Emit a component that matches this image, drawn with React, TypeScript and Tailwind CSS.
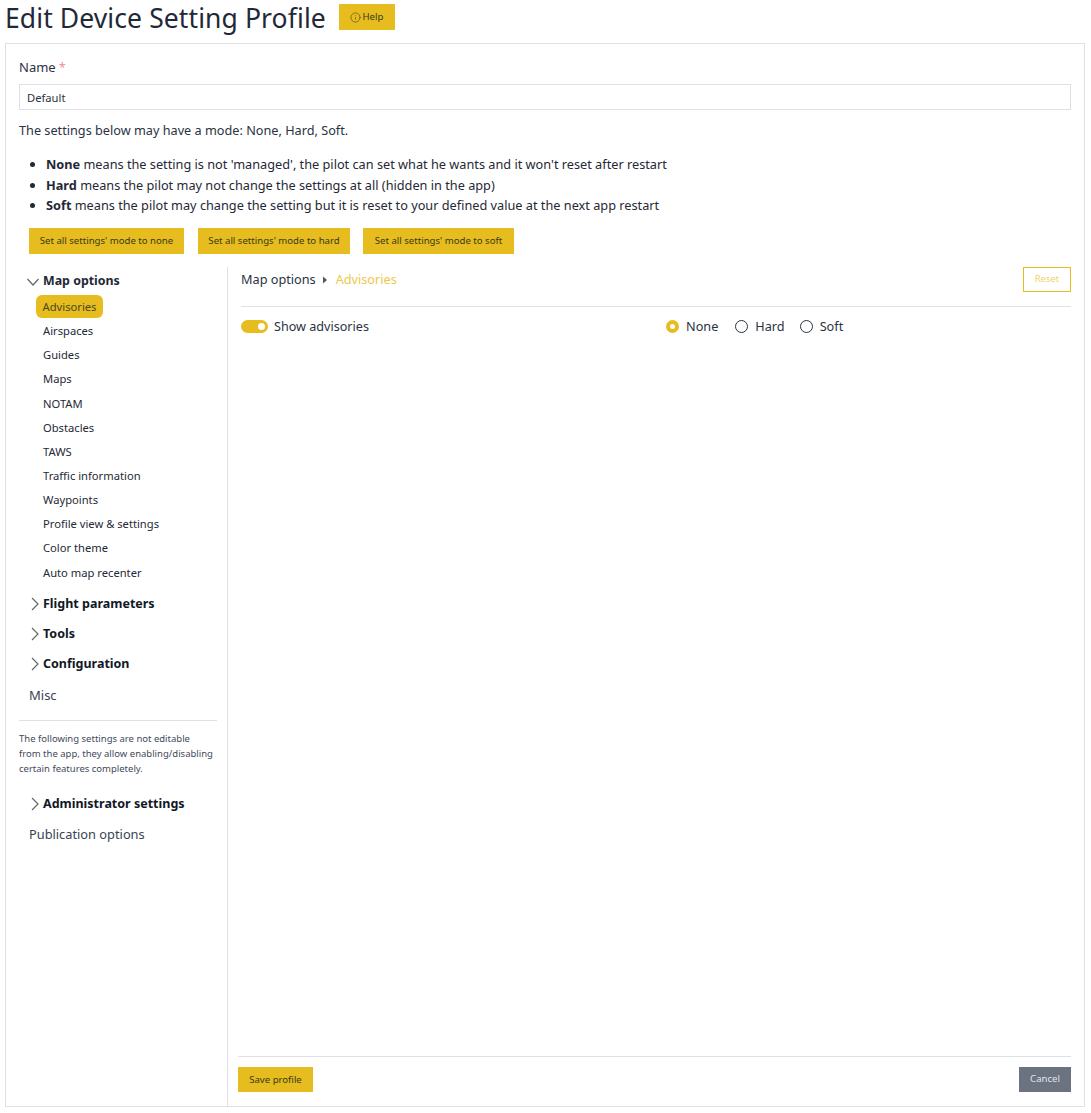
import React from "react";
import { Info } from "lucide-react";

const font = "font-['Noto_Sans','Open_Sans',sans-serif]";
const ybtn = "bg-[#e6bc1e] text-[#3a3a1a] text-[9.6px] leading-none flex items-center justify-center";

const subItems = ["Airspaces", "Guides", "Maps", "NOTAM", "Obstacles", "TAWS", "Traffic information", "Waypoints", "Profile view & settings", "Color theme", "Auto map recenter"];

function Right() {
  return (
    <svg width="8" height="14" viewBox="0 0 8 14" fill="none" className="shrink-0 -mt-[1px]">
      <path d="M1 1 L7 7 L1 13" stroke="#666" strokeWidth="1.2" />
    </svg>
  );
}

function Group({ label, className = "" }: { label: string; className?: string }) {
  return (
    <div className={`flex items-center h-[30px] pl-[12px] ${className}`}>
      <Right />
      <span className="ml-[4px] text-[12.5px] font-bold text-[#111827]">{label}</span>
    </div>
  );
}

export default function App() {
  return (
    <div className={`${font} w-[1091px] h-[1113px] bg-white text-[#2a3342] overflow-hidden`}>
      <div className="h-[43px] pl-[5px] pr-[6px] flex items-start">
        <h1 className="text-[26.5px] leading-[37px] text-[#1f2937] tracking-[0.1px]">Edit Device Setting Profile</h1>
        <button className={`${ybtn} ml-[13px] mt-[4px] w-[56px] h-[26px] gap-[1px]`}>
          <Info size={11} strokeWidth={1.2} />Help
        </button>
      </div>
      <div className="ml-[5px] w-[1080px] h-[1064px] border border-[#dfe0e6] px-[13px] flex flex-col">
        <div className="mt-[13px] text-[13px] leading-[20px]">Name <span className="text-[#f28a98] text-[12px] leading-none">*</span></div>
        <div className="mt-[7px] h-[26px] border border-[#dfe0e6] pl-[7px] pt-[3px] flex items-center text-[11.2px]">Default</div>
        <p className="mt-[10px] text-[12.7px] leading-[20px]">The settings below may have a mode: None, Hard, Soft.</p>
        <ul className="mt-[14px] pl-[27px] list-disc text-[12.72px] leading-[20.5px] text-[#1f2937]">
          <li><b>None</b> means the setting is not 'managed', the pilot can set what he wants and it won't reset after restart</li>
          <li><b>Hard</b> means the pilot may not change the settings at all (hidden in the app)</li>
          <li><b>Soft</b> means the pilot may change the setting but it is reset to your defined value at the next app restart</li>
        </ul>
        <div className="mt-[12px] ml-[10px] flex">
          <button className={`${ybtn} w-[155px] h-[26px]`}>Set all settings' mode to none</button>
          <button className={`${ybtn} w-[152px] h-[26px] ml-[14px]`}>Set all settings' mode to hard</button>
          <button className={`${ybtn} w-[151px] h-[26px] ml-[13px]`}>Set all settings' mode to soft</button>
        </div>
        <div className="mt-[13px] flex flex-1 min-h-0">
          <div className="w-[209px] border-r border-[#dfe0e6] shrink-0">
            <div className="flex items-center h-[26px] pl-[8px] pt-[4px]">
              <svg width="12" height="8" viewBox="0 0 12 8" fill="none" className="shrink-0">
                <path d="M0.5 1 L6 7 L11.5 1" stroke="#666" strokeWidth="1.2" />
              </svg>
              <span className="ml-[4px] text-[12.4px] font-bold text-[#1f2937]">Map options</span>
            </div>
            <div className="mt-[2px] ml-[17px] w-[67px] h-[23px] pt-[3px] rounded-[6px] bg-[#e6bc1e] text-[11.2px] flex items-center justify-center text-[#4a4a20]">Advisories</div>
            <div className="mt-[2px]">
              {subItems.map((s) => (
                <div key={s} className="h-[24.15px] pl-[24px] flex items-center text-[11.2px] text-[#1f2937]">{s}</div>
              ))}
            </div>
            <div className="mt-[4.5px]">
              <Group label="Flight parameters" />
              <Group label="Tools" />
              <Group label="Configuration" />
            </div>
            <div className="pl-[10px] text-[13px] leading-[30px] text-[#3a4352]">Misc</div>
            <div className="mt-[10px] w-[198px] border-t border-[#dfe0e6]" />
            <p className="mt-[10px] w-[198px] whitespace-nowrap text-[9.5px] leading-[15px] text-[#3f4a5a]">The following settings are not editable<br />from the app, they allow enabling/disabling<br />certain features completely.</p>
            <Group label="Administrator settings" className="mt-[14px]" />
            <div className="-mt-[1px] pl-[10px] text-[12.8px] leading-[30px] text-[#3a4352]">Publication options</div>
          </div>
          <div className="flex-1 flex flex-col pl-[10px]">
            <div className="ml-[3px] flex items-center h-[26px]">
              <span className="text-[12.7px]">Map options</span>
              <svg width="6" height="8" viewBox="0 0 6 8" className="ml-[6px] mr-[8px] shrink-0"><path d="M1 0.5 L5 4 L1 7.5 Z" fill="#555" /></svg>
              <span className="text-[12.7px] text-[#ecc94b]">Advisories</span>
              <button className="ml-auto w-[48px] h-[25px] border border-[#e6bc1e] text-[#f0d56a] text-[9.5px]">Reset</button>
            </div>
            <div className="ml-[3px] mt-[13px] border-t border-[#dfe0e6]" />
            <div className="ml-[3px] mt-[10px] flex items-center h-[20px]">
              <span className="relative w-[27px] h-[13px] rounded-full bg-[#e6bc1e]">
                <span className="absolute right-[3px] top-[3px] w-[7px] h-[7px] rounded-full bg-white" />
              </span>
              <span className="ml-[6px] pt-[2px] text-[12.6px] w-[96px] whitespace-nowrap">Show advisories</span>
              <div className="ml-[296px] flex items-center text-[12.7px]">
                <span className="w-[13px] h-[13px] rounded-full border-[4px] border-[#e6bc1e] bg-white" />
                <span className="ml-[7px]">None</span>
                <span className="ml-[17px] w-[13px] h-[13px] rounded-full border border-[#2a3342]" />
                <span className="ml-[7px] -mr-[1px]">Hard</span>
                <span className="ml-[16px] w-[13px] h-[13px] rounded-full border border-[#2a3342]" />
                <span className="ml-[7px]">Soft</span>
              </div>
            </div>
            <div className="flex-1" />
            <div className="border-t border-[#dfe0e6] h-[50px] flex items-start pt-[10px] justify-between">
              <button className={`${ybtn} w-[75px] h-[25px]`}>Save profile</button>
              <button className="w-[52px] h-[25px] bg-[#6b7280] text-[#dfe6ee] text-[9.6px]">Cancel</button>
            </div>
          </div>
        </div>
      </div>
    </div>
  );
}
